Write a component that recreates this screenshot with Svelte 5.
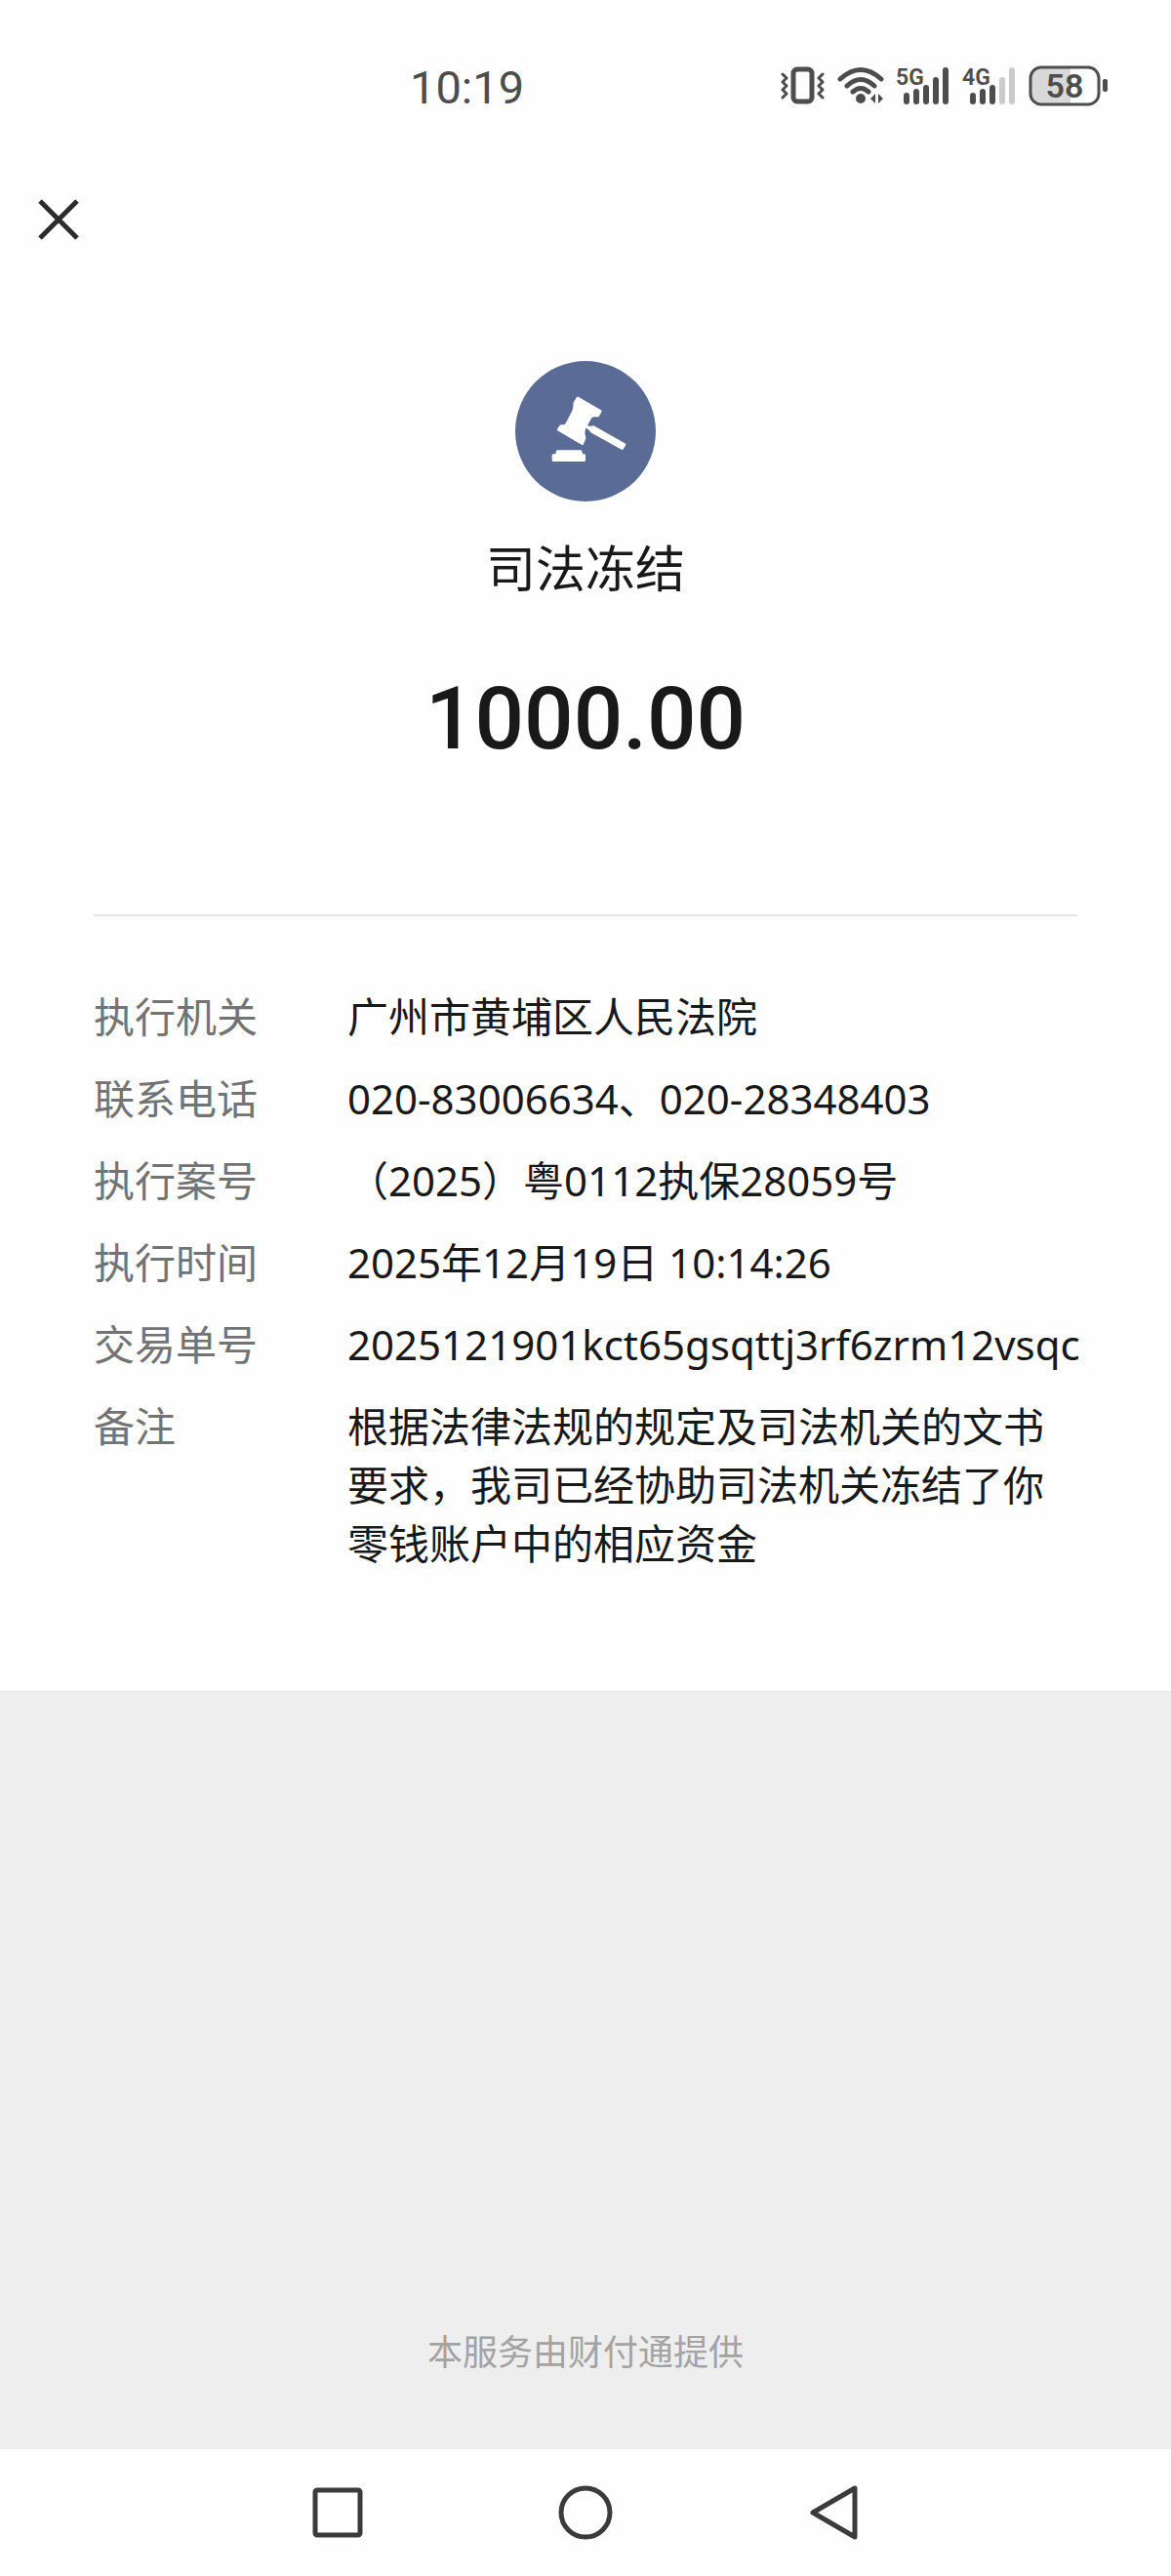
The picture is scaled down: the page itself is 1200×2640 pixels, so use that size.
<script>
  const amount = '1000.00';

  const details = [
    { label: '执行机关', value: '广州市黄埔区人民法院' },
    { label: '联系电话', value: '020-83006634、020-28348403' },
    { label: '执行案号', value: '（2025）粤0112执保28059号' },
    { label: '执行时间', value: '2025年12月19日 10:14:26' },
    { label: '交易单号', value: '2025121901kct65gsqttj3rf6zrm12vsqc' },
    { label: '备注', value: '根据法律法规的规定及司法机关的文书要求，我司已经协助司法机关冻结了你零钱账户中的相应资金' }
  ];

  const networks = [
    { name: '5G', level: 5 },
    { name: '4G', level: 3 }
  ];

  // top of each signal bar
  const bars = [27, 23, 19, 11, 1];
</script>

<div class="page">
  <header class="status">
    <time>10:19</time>
    <div class="icons">
      <svg width="46" height="40" viewBox="0 0 46 40" fill="none" stroke="#4d4d4d">
        <rect x="13" y="3" width="19" height="33" rx="4" stroke-width="5" />
        <path d="M2 8l4 4-4 4 4 4-4 4 4 4-4 4M43 8l-4 4 4 4-4 4 4 4-4 4 4 4" stroke-width="3" stroke-linecap="round" stroke-linejoin="round" />
      </svg>
      <svg width="48" height="40" viewBox="0 0 48 40" fill="none" stroke="#4d4d4d" stroke-width="5" stroke-linecap="round">
        <path d="M3 13Q24-6 45 13M10 20Q24 7 38 20M16 26Q24 19 32 26" />
        <circle cx="24" cy="33" r="5" fill="#4d4d4d" stroke="none" />
        <path d="M39 28v10l-5-5zM42 28v10l5-5z" fill="#4d4d4d" stroke="none" />
      </svg>
      {#each networks as network}
        <svg class="signal" width="56" height="60" viewBox="0 -10 56 60">
          <text x="0" y="19">{network.name}</text>
          {#each bars as top, i}
            <rect x={8 + i * 10} y={top} width="6" height={39 - top} rx="3" fill={i < network.level ? '#4d4d4d' : '#cbcbcb'} />
          {/each}
        </svg>
      {/each}
      <svg class="battery" width="82" height="42" viewBox="0 0 82 42">
        <path d="M13 2H43V40H13Q2 40 2 29V13Q2 2 13 2Z" fill="#d8d8d8" />
        <rect x="2" y="2" width="70" height="38" rx="11" fill="none" stroke="#4d4d4d" stroke-width="3" />
        <rect x="76" y="14" width="5" height="13" rx="2" fill="#4d4d4d" />
        <text x="37" y="33" text-anchor="middle">58</text>
      </svg>
    </div>
  </header>

  <main>
    <button class="close" aria-label="关闭">
      <svg width="42" height="42" viewBox="0 0 42 42" stroke="#2c2c2c" stroke-width="5">
        <path d="M2 2L40 40M40 2L2 40" />
      </svg>
    </button>

    <section class="summary">
      <svg width="144" height="144" viewBox="0 0 432 432">
        <circle cx="216" cy="216" r="216" fill="#5a6c96" />
        <g fill="#fff" stroke="#fff" stroke-width="8" stroke-linejoin="round">
          <path d="M192 114L262 154L254 168L242 167L232 172L212 208L210 222L213 238L206 254L133 211L140 200L153 199L159 192L180 152L182 139L183 128Z" />
          <path d="M220 202L230 205L241 203L336 257L329 269L234 216L228 208Z" />
          <path d="M130 278H201L204 290H212V305H117V290H127Z" />
        </g>
      </svg>
      <h1>司法冻结</h1>
      <p class="amount">{amount}</p>
    </section>

    <dl>
      {#each details as item}
        <div class="row">
          <dt>{item.label}</dt>
          <dd>{item.value}</dd>
        </div>
      {/each}
    </dl>
  </main>

  <footer>本服务由财付通提供</footer>

  <nav>
    <button aria-label="最近任务">
      <svg width="58" height="58" viewBox="0 0 58 58">
        <rect x="6" y="6" width="46" height="46" rx="2" />
      </svg>
    </button>
    <button aria-label="主屏幕">
      <svg width="58" height="58" viewBox="0 0 58 58">
        <circle cx="29" cy="29" r="25" />
      </svg>
    </button>
    <button aria-label="返回">
      <svg width="58" height="58" viewBox="0 0 58 58">
        <path d="M51 4V54L8 29Z" />
      </svg>
    </button>
  </nav>
</div>

<style>
  :global(body) {
    margin: 0;
  }

  .page {
    display: flex;
    flex-direction: column;
    min-height: 100vh;
    background: #eee;
    color: #191919;
    font-family: "Noto Sans", "Noto Sans CJK SC", sans-serif;
  }

  .status {
    display: flex;
    align-items: center;
    justify-content: space-between;
    height: 180px;
    padding: 0 64px 0 35%;
    background: #fefefe;
    color: #4d4d4d;
    font-family: Roboto, sans-serif;
  }

  time {
    font-size: 47px;
    line-height: 60px;
  }

  .icons {
    display: flex;
    align-items: center;
    gap: 12px;
    padding-bottom: 4px;
  }

  .icons text {
    fill: #4d4d4d;
    font-weight: 600;
  }

  .signal text {
    font-size: 23px;
  }

  .battery text {
    font-size: 34px;
  }

  main {
    padding-bottom: 121px;
    border-bottom: 1px solid #e5e5e5;
    background: #fefefe;
  }

  button {
    display: flex;
    align-items: center;
    justify-content: center;
    padding: 0;
    border: 0;
    background: none;
  }

  .close {
    width: 120px;
    height: 90px;
  }

  .summary {
    display: flex;
    flex-direction: column;
    align-items: center;
    padding: 100px 0 140px;
  }

  h1 {
    margin: 38px 0 0;
    font-size: 51px;
    font-weight: 400;
    line-height: 60px;
  }

  .amount {
    margin: 65px 0 0;
    font-family: Roboto, sans-serif;
    font-size: 89px;
    font-weight: 500;
    line-height: 120px;
  }

  dl {
    display: flex;
    flex-direction: column;
    gap: 24px;
    margin: 0 96px;
    padding-top: 73px;
    border-top: 2px solid #e5e5e5;
    font-size: 42px;
    line-height: 60px;
  }

  .row {
    display: grid;
    grid-template-columns: 260px 1fr;
  }

  dt {
    color: #737373;
  }

  dd {
    min-width: 0;
    margin: 0;
  }

  footer {
    display: flex;
    flex: 1;
    align-items: flex-end;
    justify-content: center;
    padding-bottom: 72px;
    color: #a3a3a3;
    font-size: 36px;
    line-height: 54px;
  }

  nav {
    display: flex;
    align-items: center;
    justify-content: center;
    gap: 196px;
    height: 130px;
    background: #fefefe;
  }

  nav svg {
    fill: none;
    stroke: #3b3b3b;
    stroke-width: 5;
    stroke-linejoin: round;
  }
</style>
